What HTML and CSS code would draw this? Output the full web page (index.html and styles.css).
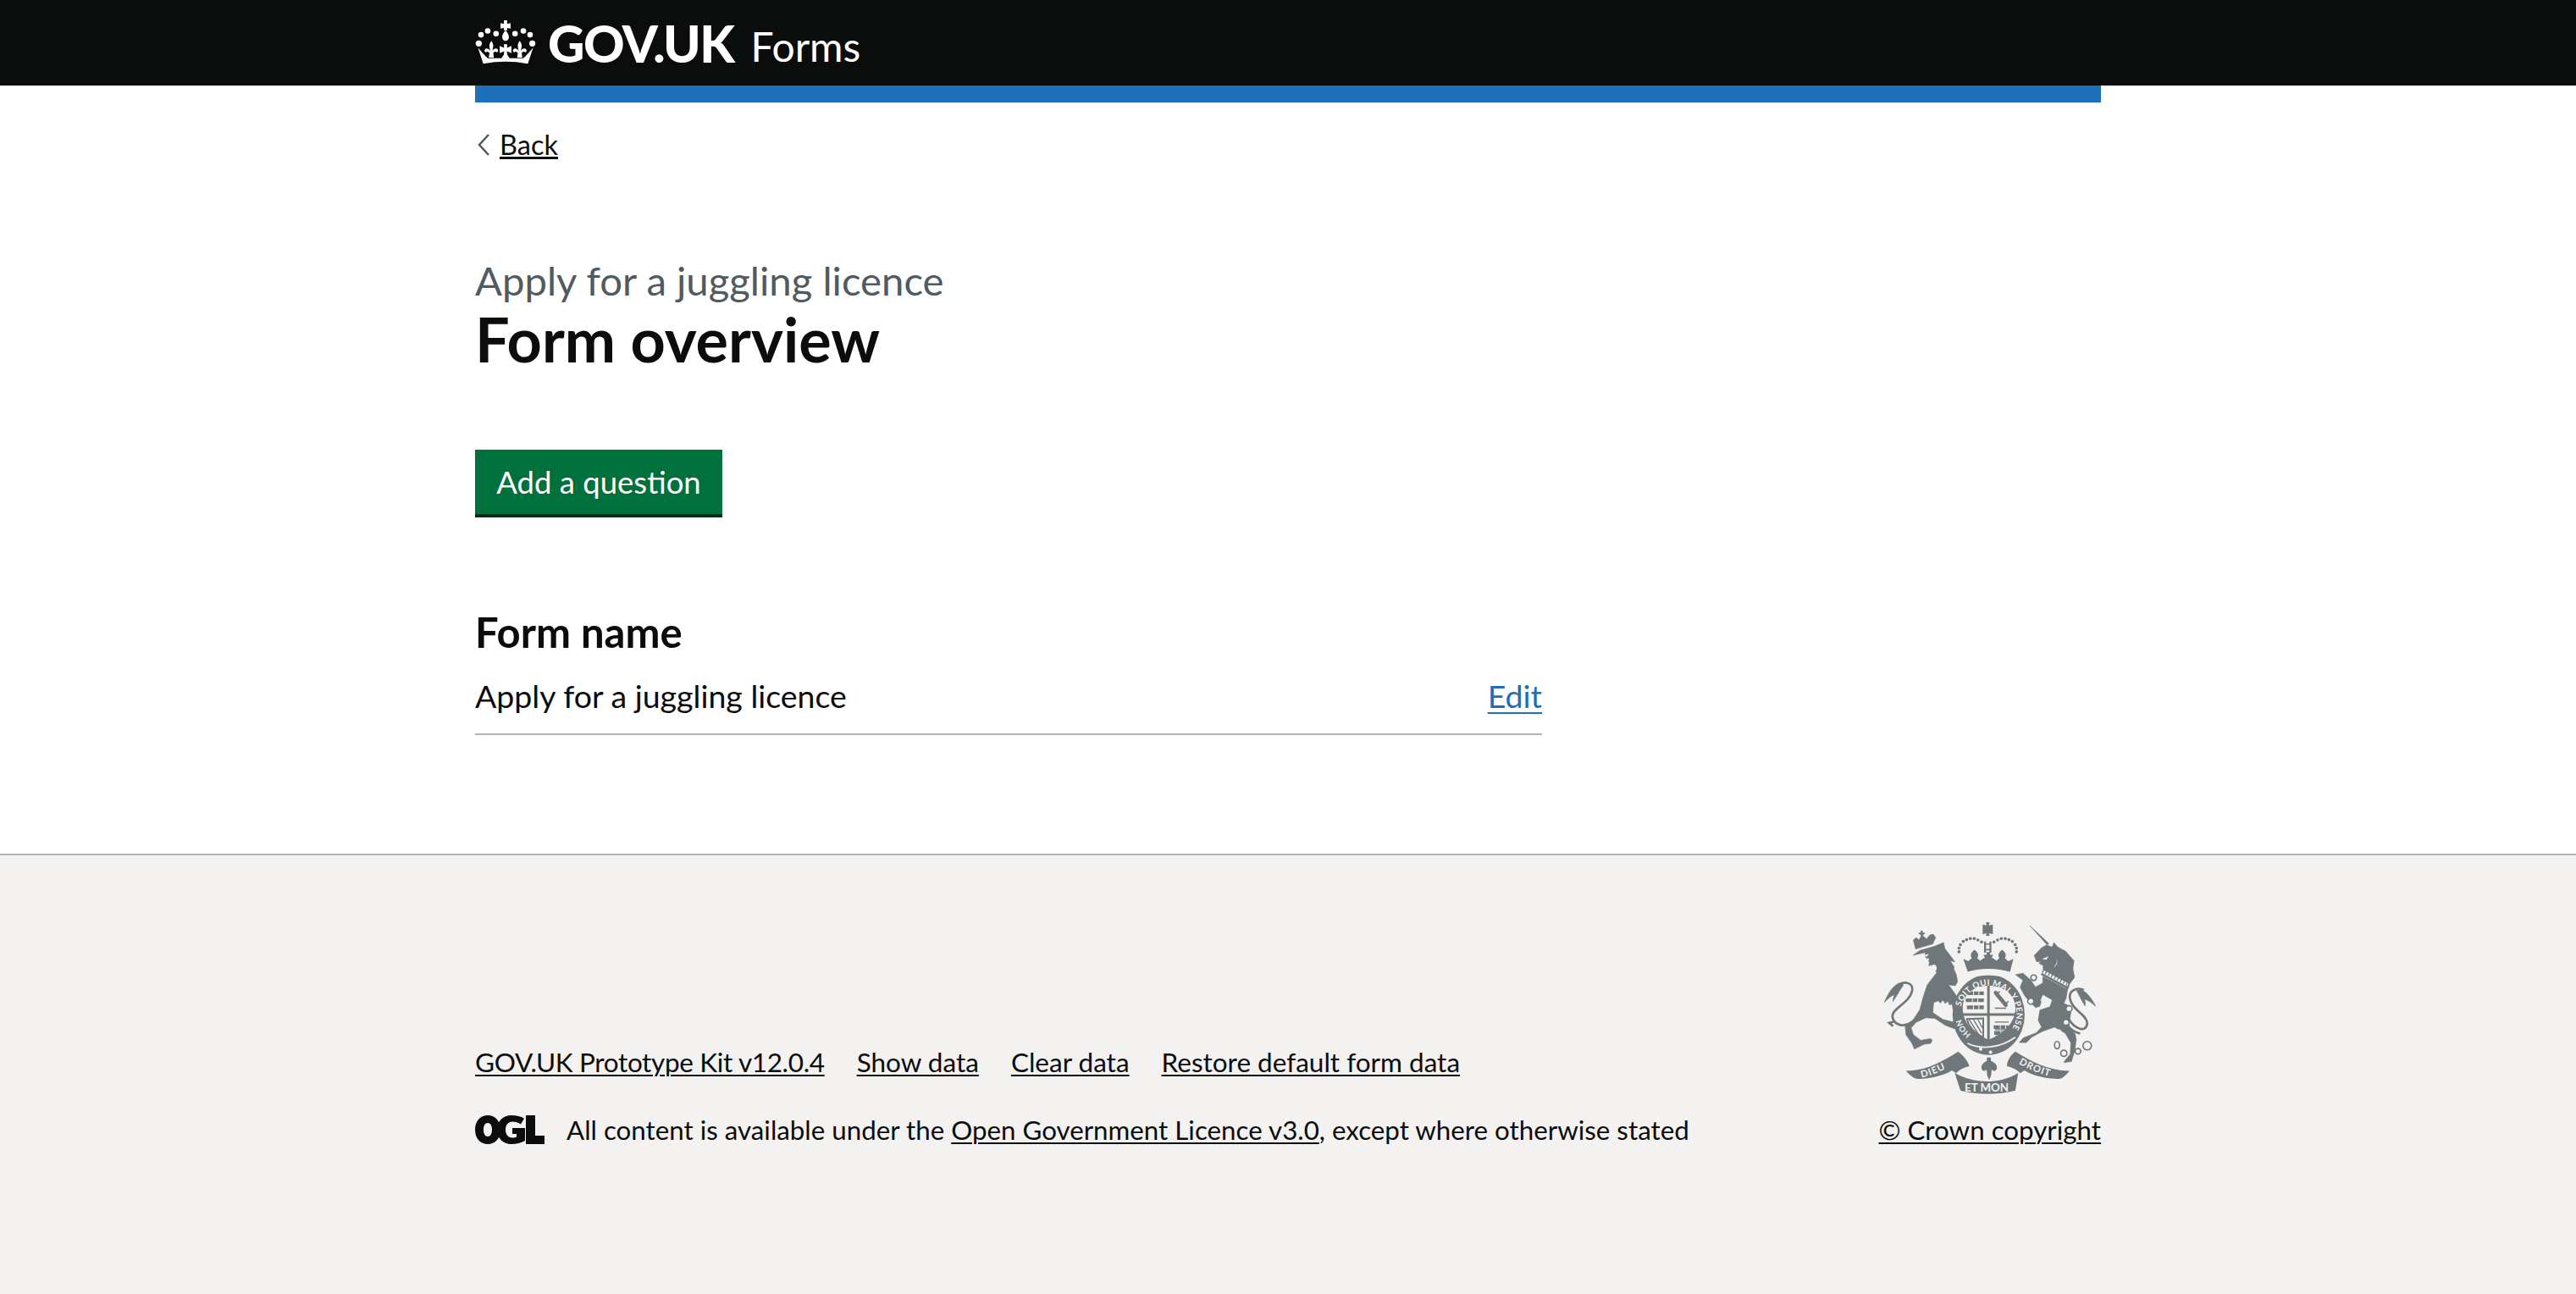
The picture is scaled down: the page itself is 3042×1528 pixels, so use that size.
FILE: index.html
```html
<!DOCTYPE html>
<html lang="en">
<head>
<meta charset="utf-8">
<title>Form overview</title>
<link rel="stylesheet" href="styles.css">
</head>
<body>
<header class="site-header">
  <div class="container header-inner">
    <a class="logo" href="#">
      <svg class="crown" viewBox="18 10 216 158" aria-hidden="true">
        <defs>
          <g id="crown-half">
            <circle cx="38" cy="62" r="10"/>
            <circle cx="62" cy="48" r="10"/>
            <circle cx="92" cy="58" r="10"/>
            <circle cx="30" cy="93" r="11"/>
            <path d="M75 84c7 9 9 18 5 30l-1 6c5-9 14-11 19-6 3 5 1 10-4 11l-4-3-8 4 2 18H66l2-18-8-4-4 3c-5-1-7-6-4-11 5-5 14-3 19 6l-1-6c-4-12-2-21 5-30z"/>
          </g>
        </defs>
        <g fill="#fff">
          <use href="#crown-half"/>
          <use href="#crown-half" transform="matrix(-1 0 0 1 252 0)"/>
          <path d="M120 10h12v13l12-3v20l-12-3v9h-12v-9l-12 3V20l12 3z"/>
          <path d="M126 46c7 9 12 16 12 24 0 8-5 14-12 14s-12-6-12-14c0-8 5-15 12-24z"/>
          <path d="M120 96h12l-1 13 16-7v26l-16-7 1 12 9 14h-30l9-14 1-12-16 7v-26l16 7z"/>
          <path d="M27 108l17 20c8 8 12 14 18 18h128c6-4 10-10 18-18l17-20-19 58c-56-10-104-10-160 0z"/>
        </g>
      </svg>
      <span class="logo-text">GOV.UK</span>
      <span class="service-name">Forms</span>
    </a>
  </div>
</header>
<div class="container">
  <div class="blue-bar"></div>
  <a class="back-link" href="#">
    <svg class="back-chevron" viewBox="0 0 14 26" aria-hidden="true"><path d="M13 1L2 13l11 12" fill="none" stroke="#505a5f" stroke-width="2.500"/></svg>
    <span class="back-text">Back</span>
  </a>
  <main class="main">
    <span class="caption">Apply for a juggling licence</span>
    <h1 class="title">Form overview</h1>
    <a class="button" href="#">Add a question</a>
    <h2 class="section-title">Form name</h2>
    <div class="summary-row">
      <span class="summary-value">Apply for a juggling licence</span>
      <a class="edit-link" href="#">Edit</a>
    </div>
  </main>
</div>
<footer class="site-footer">
  <div class="container footer-inner">
    <div class="footer-left">
      <ul class="footer-links">
        <li class="kit-link"><a href="#">GOV.UK Prototype Kit v12.0.4</a></li>
        <li><a href="#">Show data</a></li>
        <li><a href="#">Clear data</a></li>
        <li><a href="#">Restore default form data</a></li>
      </ul>
      <div class="licence">
        <svg class="ogl" viewBox="0 0 82 34" aria-hidden="true">
          <g fill="#0b0c0c">
            <path fill-rule="evenodd" d="M15 0C6 0 0 7 0 17s6 17 15 17 15-7 15-17S24 0 15 0zm0 9c3.300 0 5 3.500 5 8s-1.700 8-5 8-5-3.500-5-8 1.700-8 5-8z"/>
            <path d="M43 0C33 0 26 7 26 17s7 17 17 17c6 0 11-1.500 16-4V15H44v7h5v3.500c-1.500.600-3.500 1-5 1-5 0-8-4-8-9.500S39 7.500 44 7.500c4 0 7 1 10 3l4-6.800C54 1.300 49 0 43 0z"/>
            <path d="M60 0h11v24h11v10H60z"/>
          </g>
        </svg>
        <span class="licence-text">All content is available under the <a href="#">Open Government Licence v3.0</a>, except where otherwise stated</span>
      </div>
    </div>
    <div class="crown-copyright">
      <svg class="arms" viewBox="135 95 750 610" aria-hidden="true">
        <g fill="#6f777b" stroke="#6f777b" stroke-width="2" stroke-linejoin="round">
          <!-- lion's crown -->
          <path d="M246 190l-8-32 10-8 10 8 8-14-2-6-6-1v-4l6 1 1-8h5l1 8 6-2v5l-6 2 2 6 12 9 12-14 12-2 8 12-4 8-6 14z"/>
          <!-- lion -->
          <path d="M237 212l25-17 50-14 33-14 5 22 14 18 21 28-16-3 14 22-2 6 9 20 5 25-8 15-24-3 30 42 12 38 5 20-9 3-22-14-4-22-9 5-5-14-10 8-9-12-8 11-8-8-16 6-3 36 36 24 48 12h22l-15 14-14 7-32-12-38-25-32-2-34 16-18 20 8 24 26 20 34-6 7 5-5 12-24 3-34 17-10-22-20-28-3-30 30-26 22-34 12-45 14-42 34-44-20-28-8 4 2-14-16-22 1-14-6 4z"/>
          <!-- lion's tail -->
          <path d="M190 310c-25 10-40 35-55 70 12-13 24-24 36-28-3 8-5 15-6 24 14-18 26-44 38-58z"/>
        </g>
        <path fill="#f3f2f1" d="M272 213l22-6-8 10zM310 245c7 0 11 6 11 13s-4 12-9 12-10-5-10-12 3-13 8-13zM282 226l10-3 2 8z"/>
        <g fill="none" stroke="#6f777b" stroke-width="8">
          <path d="M232 450c-28 20-62 10-68-18-5-32 62-48 70-96 3-24-24-34-46-20"/>
          <path d="M168 448l-16 4 14 12"/>
        </g>
        <g fill="#6f777b" stroke="#6f777b" stroke-width="2" stroke-linejoin="round">
          <!-- unicorn -->
          <path d="M652 108l63 70 16 5 6-16 13 16 28 15 30 34-4 28 6 30-18 25-8 24-4 26-8 18 22 10 3 22-5 30-2 24 22 22 4 20-5 38-12 40-27 4 3-6 20-24 2-40-20-34-38-22-42 15-38 20-20 20h-25l15-17 46-18 18-20-12-24 6-36 36-12 8-24-34-20-8 20 2 8-4 14-15 5-24-24-15-18-16-30 10-25-26-20 26-5 28 25 16 24 26-14 2-62-24-14-8-22 26-27 26-15z"/>
          <!-- unicorn's tail -->
          <path d="M835 335c20 10 35 30 50 58-14-12-28-22-40-25 3 10 4 18 2 24-12-20-22-40-30-55z"/>
        </g>
        <path fill="#f3f2f1" d="M694 226l24-10-8 12zM668 237l22-2-10 6zM745 220c6 14 0 28-12 36 10-2 22-16 12-36z"/>
        <g fill="none" stroke="#6f777b">
          <g stroke-width="8">
            <path d="M790 440c20 32 60 50 65 15 3-30-60-50-62-95-2-25 30-35 50-25"/>
            <path d="M785 460c10 15 25 25 45 30"/>
          </g>
          <g stroke-width="5">
            <circle cx="665" cy="292" r="10"/><circle cx="655" cy="375" r="11"/><circle cx="790" cy="402" r="11"/>
            <ellipse cx="748" cy="531" rx="9" ry="13"/><circle cx="772" cy="560" r="11"/><circle cx="822" cy="553" r="10"/><circle cx="855" cy="533" r="15"/>
          </g>
        </g>
        <g fill="#f3f2f1">
          <circle cx="780" cy="450" r="8"/><circle cx="755" cy="483" r="8"/>
          <circle cx="790" cy="402" r="8"/><circle cx="655" cy="375" r="8"/>
        </g>
        <!-- collar -->
        <g fill="none">
          <path d="M692 272l92 50" stroke="#f3f2f1" stroke-width="20"/>
          <path d="M692 278l92 50" stroke="#6f777b" stroke-width="8"/>
          <path d="M696 268l88 48" stroke="#6f777b" stroke-width="10" stroke-dasharray="4 8"/>
        </g>
        <g fill="#6f777b">
          <!-- big crown: cross and post -->
          <path d="M495 93h14l-3 13 14-3v34l-14-3 3 9h-14l3-9-14 3v-34l14 3z"/>
          <path d="M489 163h7v40h-7zM508 163h7v40h-7zM490 170h24v5h-24zM490 190h24v5h-24z"/>
          <!-- big crown: pearls -->
          <circle cx="400" cy="200" r="5.500"/><circle cx="400" cy="187" r="5.500"/><circle cx="405" cy="175" r="5.500"/><circle cx="415" cy="163" r="5.500"/><circle cx="427" cy="157" r="5.500"/><circle cx="440" cy="153" r="5.500"/><circle cx="454" cy="153" r="5.500"/><circle cx="467" cy="158" r="5.500"/><circle cx="480" cy="165" r="5.500"/>
          <circle cx="604" cy="200" r="5.500"/><circle cx="604" cy="187" r="5.500"/><circle cx="599" cy="175" r="5.500"/><circle cx="589" cy="163" r="5.500"/><circle cx="577" cy="157" r="5.500"/><circle cx="564" cy="153" r="5.500"/><circle cx="550" cy="153" r="5.500"/><circle cx="537" cy="158" r="5.500"/><circle cx="524" cy="165" r="5.500"/>
          <!-- big crown: fleurs and cap -->
          <path d="M415 225l18 8 12-10c-6-12-3-20 10-30 13 10 16 18 10 30l10 9 12-9 5 0-5-12h10l2-10h10l2 10h10l-5 12h5l12 9 10-9c-6-12-3-20 10-30 13 10 16 18 10 30l12 10 18-8-12 46c-50-10-100-10-150 0z"/>
          <!-- shield ring -->
          <ellipse cx="505" cy="423" rx="128" ry="143"/>
        </g>
        <path fill="#f3f2f1" d="M428 272c45-16 108-16 154 0l-8 22c-44-14-94-14-138 0z"/>
        <!-- shield -->
        <path fill="#f3f2f1" d="M413 400c0-50 40-80 92-80s95 30 95 80c0 50-40 90-95 112-55-22-92-62-92-112z"/>
        <path fill="#6f777b" d="M500 320h9v195h-9zM413 418h187v9H413z"/>
        <g fill="none" stroke="#6f777b">
          <path stroke-width="13" d="M428 347h60M424 372h64M428 397h60M523 467h52M525 488h40" stroke-dasharray="22 3 16 3"/>
          <path stroke-width="4" d="M527 449h50M527 476h42M530 499h26M436 440l38 60M450 438l30 50M465 436l18 34"/>
          <path stroke-width="14" d="M530 345l36 44" stroke-linecap="round"/>
          <path stroke-width="5" d="M545 340l-14 12M575 375l-14 16M527 400h40"/>
          <path stroke-width="6" d="M428 438c5 25 25 48 58 66V436z"/>
        </g>
        <!-- belt -->
        <path fill="none" stroke="#f3f2f1" stroke-width="5" d="M430 525c45 22 115 18 170-22"/>
        <g fill="#f3f2f1"><circle cx="477" cy="545" r="6"/><circle cx="512" cy="556" r="6"/></g>
        <g fill="#6f777b">
          <!-- motto ribbons -->
          <path d="M212 622c70 0 125-30 185-68 20 15 35 35 40 52-25 6-40 16-47 25l-15-10c-40 25-100 30-120 30-15 0-30-14-43-29z"/>
          <path d="M790 622c-70 0-130-30-190-68-20 15-30 35-30 52 25 6 40 16 47 25l15-10c40 25 100 30 120 30 15 0 28-14 40-29z"/>
          <path d="M385 630c70 40 160 40 225 0l-10 62c-60 16-135 16-195 0z"/>
          <path d="M499 575h14v12c12 4 24 14 21 27-3 12-15 10-18 3l-2 22-7 16-7-16-2-22c-3 7-15 9-18-3-3-13 9-23 19-27z"/>
        </g>
        <defs>
          <path id="motto" d="M407 395A100 100 0 1 1 575 490"/>
          <path id="hon" d="M443 493A100 100 0 0 1 405 425"/>
          <path id="dieu" d="M268 647Q325 632 385 597"/>
          <path id="droit" d="M612 597Q665 628 740 648"/>
        </defs>
        <g class="arms-motto">
          <text font-size="30"><textPath href="#motto" letter-spacing="1">SOIT QUI MAL Y PENSE</textPath></text>
          <text font-size="28"><textPath href="#hon">HON</textPath></text>
          <text font-size="34"><textPath href="#dieu" letter-spacing="3">DIEU</textPath></text>
          <text font-size="34"><textPath href="#droit" letter-spacing="3">DROIT</textPath></text>
          <text font-size="40" x="498" y="695" text-anchor="middle">ET MON</text>
        </g>
      </svg>
      <a href="#">© Crown copyright</a>
    </div>
  </div>
</footer>
</body>
</html>
```
FILE: styles.css
```css
* { box-sizing: border-box; }
html, body { margin: 0; padding: 0; }
body {
  font-family: Lato, "Noto Sans", sans-serif;
  color: #0b0c0c;
  background: #fff;
  min-height: 1528px;
  display: flex;
  flex-direction: column;
}
a { color: inherit; }
.container { width: 1920px; margin: 0 auto; }
.site-header { background: #0b0c0c; height: 101px; color: #fff; }
.header-inner { height: 101px; padding-top: 24px; }
.logo { display: flex; align-items: flex-start; color: #fff; text-decoration: none; }
.crown { width: 72px; height: 52px; margin-right: 14px; }
.logo-text { font-size: 60px; font-weight: 900; line-height: 60px; letter-spacing: -1.500px; margin-top: -3px; }
.service-name { font-size: 48px; line-height: 62px; margin-left: 20px; }
.blue-bar { height: 20px; background: #1d70b8; }
.back-link {
  display: inline-flex;
  align-items: center;
  gap: 12px;
  margin-top: 31px;
  margin-left: 3px;
  font-size: 32.500px;
  line-height: 38px;
}
.back-chevron { width: 14px; height: 26px; }
.back-text { text-decoration: underline; text-underline-offset: 3px; text-decoration-thickness: 2px; }
.main { padding-top: 113px; padding-bottom: 0; }
.caption { display: block; color: #505a5f; font-size: 47.300px; line-height: 56px; }
.title { margin: 0; font-size: 72px; line-height: 82px; font-weight: 700; }
.button {
  display: inline-block;
  margin-top: 90px;
  height: 76px;
  width: 292px;
  background: #00703c;
  box-shadow: 0 4px 0 #002d18;
  color: #fff;
  text-decoration: none;
  font-size: 36.500px;
  line-height: 76px;
  text-align: center;
}
.section-title { margin: 111px 0 0; font-size: 49px; line-height: 56px; font-weight: 700; }
.summary-row {
  display: flex;
  justify-content: space-between;
  width: 1260px;
  border-bottom: 2px solid #b1b4b6;
  margin-top: 23px;
  height: 71px;
  font-size: 37.500px;
  line-height: 50px;
}
.edit-link { color: #1d70b8; text-underline-offset: 5px; text-decoration-thickness: 2px; }
.site-footer {
  flex: 1;
  margin-top: 140px;
  background: #f3f2f1;
  border-top: 2px solid #b1b4b6;
}
.footer-inner { display: flex; justify-content: space-between; padding-top: 73px; }
.footer-left { padding-top: 151px; }
.footer-links { display: flex; gap: 38px; list-style: none; margin: 0; padding: 0; font-size: 31.500px; line-height: 40px; }
.kit-link { letter-spacing: -0.350px; }
.site-footer a { text-underline-offset: 3px; text-decoration-thickness: 2px; }
.licence { display: flex; align-items: center; margin-top: 40px; }
.ogl { width: 82px; height: 34px; margin-right: 26px; }
.licence-text { font-size: 31.300px; line-height: 40px; }
.crown-copyright { display: flex; flex-direction: column; align-items: flex-end; font-size: 31.300px; line-height: 40px; }
.arms { width: 250px; height: 203px; margin: 6px 6px 22px 0; }
.arms-motto { fill: #f3f2f1; font-family: Lato, sans-serif; font-weight: 700; }
```
